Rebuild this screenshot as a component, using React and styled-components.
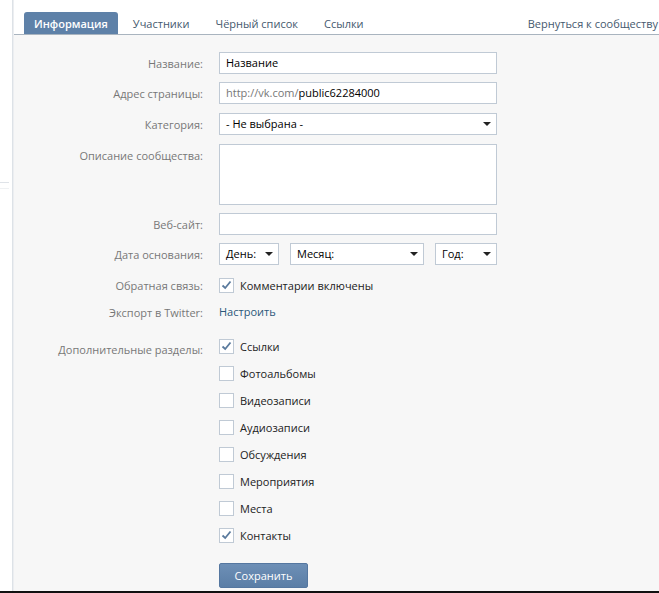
import React from "react";
import styled, { createGlobalStyle } from "styled-components";

const GlobalStyle = createGlobalStyle`
  html, body {
    margin: 0;
    background: #fff;
    font-family: "Open Sans", "DejaVu Sans", sans-serif;
    font-size: 11px;
  }
`;

const Shell = styled.div`
  display: flex;
  height: 591px;
  border-bottom: 2px solid #111;
`;

const Side = styled.div`
  width: 13px;
  padding-top: 182px;
  border-right: 1px solid #dde2e7;
  box-sizing: border-box;
`;

const SideLine = styled.div`
  width: 9px;
  height: 1px;
  background: #dfe3e8;
  margin-bottom: 5px;
  opacity: ${(p) => (p.faint ? 0.5 : 1)};
`;

const Main = styled.div`
  flex: 1;
  display: flex;
  flex-direction: column;
  background: #f7f7f7;
  border-left: 1px solid #eceef1;
  overflow: hidden;
`;

const TabBar = styled.div`
  display: flex;
  align-items: flex-end;
  height: 34px;
  padding-left: 10px;
  background: #fff;
  border-bottom: 1px solid #a9b4bf;
  white-space: nowrap;
`;

const Tab = styled.div`
  height: 22px;
  line-height: 23px;
  padding: 0 ${(p) => (p.active ? 10 : 8)}px;
  margin-right: ${(p) => (p.active ? 7 : 10)}px;
  border-radius: 3px 3px 0 0;
  background: ${(p) => (p.active ? "#5e81a8" : "transparent")};
  color: ${(p) => (p.active ? "#fff" : "#45596e")};
  font-weight: ${(p) => (p.active ? 600 : 400)};
`;

const BackLink = styled.div`
  margin-left: auto;
  height: 22px;
  line-height: 23px;
  color: #45596e;
  margin-right: 1px;
`;

const Form = styled.div`
  display: grid;
  grid-template-columns: 189px 278px;
  column-gap: 16px;
  padding-top: 17px;
  align-items: center;
`;

const Label = styled.div`
  text-align: right;
  color: #777;
  align-self: ${(p) => (p.top ? "start" : "center")};
  padding-top: ${(p) => (p.top ? 4 : 0)}px;
  margin-bottom: ${(p) => p.mb || 0}px;
`;

const Field = styled.div`
  margin-bottom: ${(p) => p.mb || 0}px;
  margin-top: ${(p) => p.mt || 0}px;
  display: flex;
  flex-direction: ${(p) => (p.column ? "column" : "row")};
  align-items: ${(p) => (p.column ? "flex-start" : "center")};
  gap: ${(p) => p.gap || 0}px;
`;

const Input = styled.div`
  box-sizing: border-box;
  width: ${(p) => p.w || 278}px;
  height: ${(p) => p.h || 22}px;
  background: #fff;
  border: 1px solid #c0cad5;
  padding: 0 6px;
  line-height: 20px;
  color: #000;
  display: flex;
  align-items: center;
`;

const Prefix = styled.span`
  color: #777;
`;

const Select = styled(Input)`
  justify-content: space-between;
  padding-right: 5px;
`;

const Arrow = styled.span`
  width: 0;
  height: 0;
  border-left: 4px solid transparent;
  border-right: 4px solid transparent;
  border-top: 4px solid #222;
`;

const DateRow = styled.div`
  display: flex;
  justify-content: space-between;
  width: 278px;
`;

const Check = styled.div`
  display: flex;
  align-items: center;
  gap: 6px;
  height: 16px;
  color: #222;
`;

const Box = styled.span`
  box-sizing: border-box;
  width: 15px;
  height: 15px;
  background: #fff;
  border: 1px solid #c0cad5;
  display: flex;
  align-items: center;
  justify-content: center;
`;

const Link = styled.div`
  color: #2b587a;
  height: 16px;
  line-height: 16px;
`;

const Button = styled.div`
  box-sizing: border-box;
  width: 89px;
  height: 25px;
  line-height: 23px;
  text-align: center;
  color: #fff;
  border: 1px solid #5577a0;
  border-radius: 2px;
  background: linear-gradient(#6d8fb6, #5b7ea6);
`;

function CheckBox({ checked, children }) {
  return (
    <Check>
      <Box>
        {checked && (
          <svg width="11" height="10" viewBox="0 0 11 10">
            <path d="M1.5 5.5 L4.2 8 L9.5 1.5" fill="none" stroke="#5a7a9d" strokeWidth="1.8" />
          </svg>
        )}
      </Box>
      {children}
    </Check>
  );
}

const sections = [
  ["Ссылки", true],
  ["Фотоальбомы", false],
  ["Видеозаписи", false],
  ["Аудиозаписи", false],
  ["Обсуждения", false],
  ["Мероприятия", false],
  ["Места", false],
  ["Контакты", true],
];

export default function App() {
  return (
    <>
      <GlobalStyle />
      <Shell>
        <Side>
          <SideLine />
          <SideLine faint />
        </Side>
        <Main>
          <TabBar>
            <Tab active>Информация</Tab>
            <Tab>Участники</Tab>
            <Tab>Чёрный список</Tab>
            <Tab>Ссылки</Tab>
            <BackLink>Вернуться к сообществу</BackLink>
          </TabBar>
          <Form>
            <Label mb={8}>Название:</Label>
            <Field mb={8}>
              <Input>Название</Input>
            </Field>

            <Label mb={9}>Адрес страницы:</Label>
            <Field mb={9}>
              <Input>
                <Prefix>http://vk.com/</Prefix>public62284000
              </Input>
            </Field>

            <Label mb={9}>Категория:</Label>
            <Field mb={9}>
              <Select>
                - Не выбрана -<Arrow />
              </Select>
            </Field>

            <Label top mb={8}>Описание сообщества:</Label>
            <Field mb={8}>
              <Input h={61} />
            </Field>

            <Label mb={8}>Веб-сайт:</Label>
            <Field mb={8}>
              <Input />
            </Field>

            <Label mb={12}>Дата основания:</Label>
            <Field mb={12}>
              <DateRow>
                <Select w={60}>
                  День:<Arrow />
                </Select>
                <Select w={134}>
                  Месяц:<Arrow />
                </Select>
                <Select w={62}>
                  Год:<Arrow />
                </Select>
              </DateRow>
            </Field>

            <Label mb={11}>Обратная связь:</Label>
            <Field mb={11}>
              <CheckBox checked>Комментарии включены</CheckBox>
            </Field>

            <Label mb={18}>Экспорт в Twitter:</Label>
            <Field mb={18}>
              <Link>Настроить</Link>
            </Field>

            <Label top>Дополнительные разделы:</Label>
            <Field column gap={11}>
              {sections.map(([name, on]) => (
                <CheckBox key={name} checked={on}>
                  {name}
                </CheckBox>
              ))}
            </Field>

            <div />
            <Field mt={20}>
              <Button>Сохранить</Button>
            </Field>
          </Form>
        </Main>
      </Shell>
    </>
  );
}
